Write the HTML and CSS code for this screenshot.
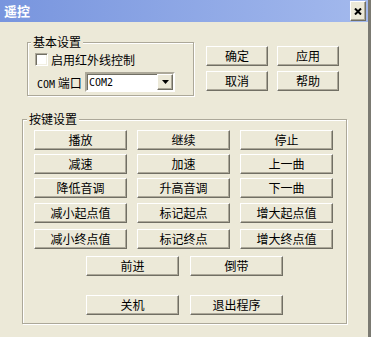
FILE: index.html
```html
<!DOCTYPE html>
<html lang="zh-CN">
<head>
    <meta charset="UTF-8">
    <title>遥控</title>
    <link rel="stylesheet" href="styles.css">
</head>
<body>
    <div class="window">
        <div class="titlebar">
            <span class="title">遥控</span>
            <button class="close">
                <svg width="8" height="7" viewBox="0 0 8 7">
                    <path d="M1 0.5 L7 6.5 M7 0.5 L1 6.5" stroke="#000" stroke-width="2"/>
                </svg>
            </button>
        </div>
        <div class="client">
            <div class="top">
                <fieldset class="group basic">
                    <legend>基本设置</legend>
                    <label class="check-row">
                        <span class="checkbox"></span>
                        <span>启用红外线控制</span>
                    </label>
                    <div class="port-row">
                        <span class="port-label"><span class="latin">COM</span> 端口</span>
                        <div class="combo">
                            <span class="combo-value latin">COM2</span>
                            <span class="combo-btn">
                                <svg width="7" height="4" viewBox="0 0 7 4"><polygon points="0,0 7,0 3.5,4" fill="#000"/></svg>
                            </span>
                        </div>
                    </div>
                </fieldset>
                <div class="actions">
                    <button class="btn">确定</button>
                    <button class="btn">应用</button>
                    <button class="btn">取消</button>
                    <button class="btn">帮助</button>
                </div>
            </div>

            <fieldset class="group keys">
                <legend>按键设置</legend>
                <div class="key-grid">
                    <button class="btn">播放</button>
                    <button class="btn">继续</button>
                    <button class="btn">停止</button>
                    <button class="btn">减速</button>
                    <button class="btn">加速</button>
                    <button class="btn">上一曲</button>
                    <button class="btn">降低音调</button>
                    <button class="btn">升高音调</button>
                    <button class="btn">下一曲</button>
                    <button class="btn">减小起点值</button>
                    <button class="btn">标记起点</button>
                    <button class="btn">增大起点值</button>
                    <button class="btn">减小终点值</button>
                    <button class="btn">标记终点</button>
                    <button class="btn">增大终点值</button>
                </div>
                <div class="pair">
                    <button class="btn">前进</button>
                    <button class="btn">倒带</button>
                </div>
                <div class="pair power">
                    <button class="btn">关机</button>
                    <button class="btn">退出程序</button>
                </div>
            </fieldset>
        </div>
    </div>
</body>
</html>
```

FILE: styles.css
```css
* {
    box-sizing: border-box;
}

body {
    margin: 0;
    overflow: hidden;
    font-family: "Noto Sans CJK SC", sans-serif;
    font-size: 12px;
    color: #000;
}

.window {
    width: 371px;
    height: 337px;
    background-color: #ece9d8;
    border-right: 3px solid #7b7a72;
    display: flex;
    flex-direction: column;
}

.titlebar {
    height: 22px;
    display: flex;
    align-items: flex-start;
    justify-content: space-between;
    background: linear-gradient(to right, #7895de, #a3b9ed);
}

.title {
    color: #fff;
    font-weight: bold;
    font-size: 13px;
    line-height: 22px;
    padding-left: 4px;
}

.close {
    width: 16px;
    height: 20px;
    margin: 1px 2px 0 0;
    padding: 0;
    display: flex;
    align-items: center;
    justify-content: center;
    background-color: #ece9d8;
    border: 1px solid;
    border-color: #fff #716f64 #716f64 #fff;
    box-shadow: inset -1px -1px 0 #aca899;
}

.client {
    flex-grow: 1;
    display: flex;
    flex-direction: column;
}

.top {
    display: flex;
    align-items: flex-start;
}

.group {
    margin: 0;
    padding: 0;
    min-width: 0;
    border: 1px solid #aca899;
    box-shadow: 1px 1px 0 #fff, inset 1px 1px 0 #fff;
}

.group legend {
    margin-left: 6px;
    padding: 0 2px;
    line-height: 14px;
    background-color: #ece9d8;
}

.basic {
    width: 167px;
    height: 61px;
    margin: 13px 0 0 27px;
    padding: 2px 0 0 0;
}

.basic legend {
    margin-left: 3px;
}

.check-row {
    height: 16px;
    margin-left: 7px;
    display: flex;
    align-items: center;
    gap: 3px;
}

.checkbox {
    width: 13px;
    height: 13px;
    background-color: #fff;
    border: 1px solid;
    border-color: #aca899 #fff #fff #aca899;
    box-shadow: inset 1px 1px 0 #716f64, inset -1px -1px 0 #f1efe2;
}

.port-row {
    margin: 5px 0 0 7px;
    height: 20px;
    display: flex;
    align-items: center;
}

.port-label {
    width: 50px;
    padding-left: 2px;
}

.latin {
    font-family: "DejaVu Sans Mono", monospace;
    font-size: 10px;
}

.combo {
    width: 90px;
    height: 20px;
    display: flex;
    align-items: center;
    background-color: #fff;
    border: 2px solid;
    border-color: #aca899 #fff #fff #aca899;
    box-shadow: inset 1px 1px 0 #716f64;
}

.combo-value {
    flex-grow: 1;
    padding-left: 2px;
}

.combo-btn {
    width: 16px;
    height: 16px;
    display: flex;
    align-items: center;
    justify-content: center;
    background-color: #ece9d8;
    border: 1px solid;
    border-color: #fff #716f64 #716f64 #fff;
    box-shadow: inset -1px -1px 0 #aca899;
}

.actions {
    margin: 24px 0 0 12px;
    display: grid;
    grid-template-columns: 62px 62px;
    column-gap: 9px;
    row-gap: 5px;
}

.btn {
    height: 20px;
    padding: 0;
    font-family: inherit;
    font-size: 12px;
    line-height: 18px;
    color: #000;
    background-color: #ece9d8;
    border: 1px solid;
    border-color: #fff #716f64 #716f64 #fff;
    box-shadow: inset -1px -1px 0 #aca899;
}

.keys {
    width: 325px;
    height: 212px;
    margin: 16px 0 0 22px;
    padding: 4px 0 0 0;
}

.keys legend {
    margin-left: 4px;
}

.key-grid {
    margin-left: 11px;
    display: grid;
    grid-template-columns: repeat(3, 93px);
    grid-template-rows: 20px 20px 20px 21px 22px;
    column-gap: 10px;
    row-gap: 4px;
    align-items: end;
}

.pair {
    margin-top: 7px;
    display: flex;
    justify-content: center;
    gap: 11px;
}

.pair .btn {
    width: 93px;
}

.pair.power {
    margin-top: 19px;
}
```
